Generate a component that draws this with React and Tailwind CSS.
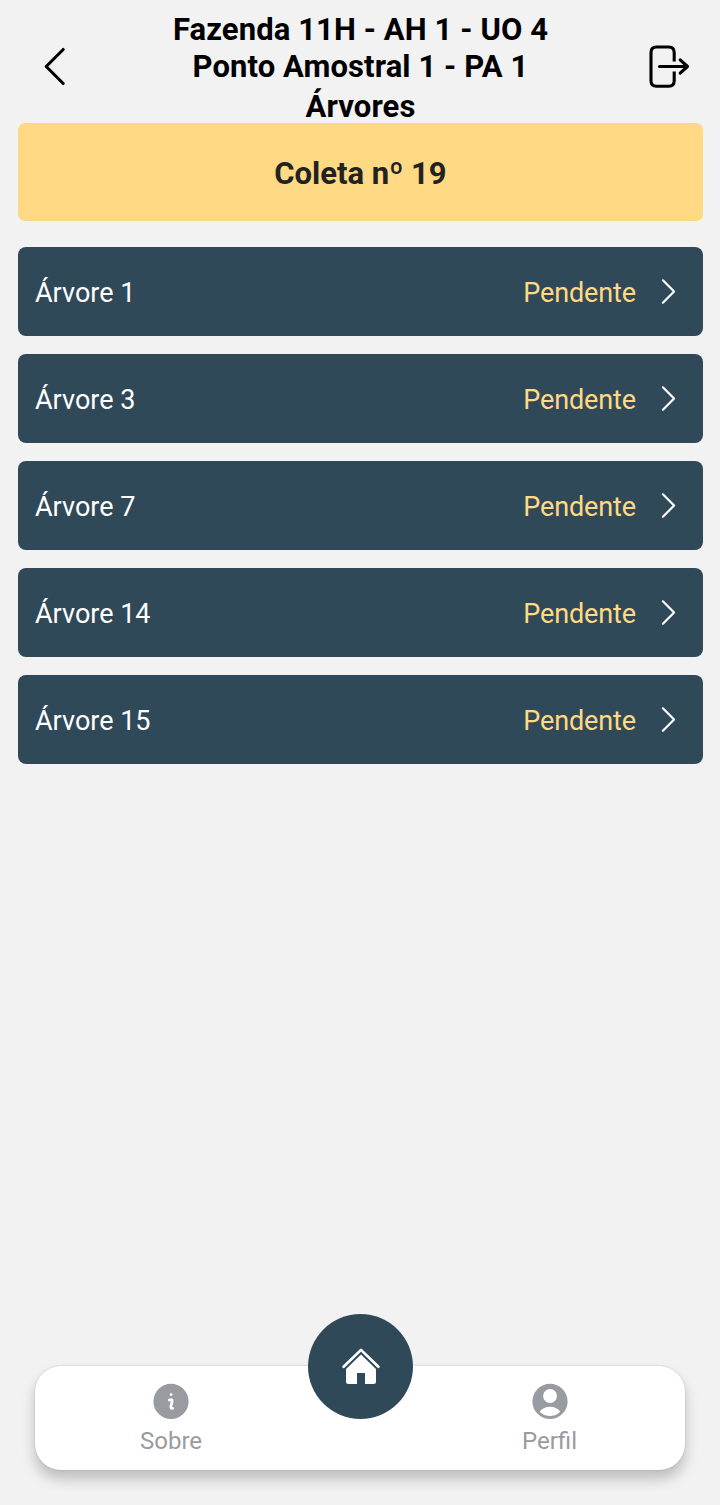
const trees = ['Árvore 1', 'Árvore 3', 'Árvore 7', 'Árvore 14', 'Árvore 15'];

function BackIcon() {
  return (
    <svg className="h-10 w-6" viewBox="0 0 24 40" fill="none" stroke="currentColor" strokeWidth="3.1" strokeLinecap="round" strokeLinejoin="round">
      <path d="M20.2 3.500 3.200 20.500 20.200 37.500" />
    </svg>
  );
}

function ExitIcon() {
  return (
    <svg className="h-11 w-11" viewBox="0 0 44 44" fill="none" stroke="currentColor" strokeWidth="3.1" strokeLinecap="butt" strokeLinejoin="round">
      <path d="M28.200 16.500V7.500Q28.200 2 22.700 2H10.500Q5 2 5 7.500V35.700Q5 41.200 10.500 41.200H22.700Q28.200 41.200 28.200 35.700V26.500" />
      <path d="M13.500 21.500H41.500M34.200 14.800 41.500 21.500 34.200 28.200" strokeLinecap="round" />
    </svg>
  );
}

function ChevronIcon() {
  return (
    <svg className="mb-px h-7 w-5" viewBox="0 0 20 28" fill="none" stroke="white" strokeWidth="2.200" strokeLinecap="round" strokeLinejoin="round">
      <path d="M4.900 3.300 16.100 14.500 4.900 25.700" />
    </svg>
  );
}

function HomeIcon() {
  return (
    <svg className="mb-[2px] h-10 w-10" viewBox="0 0 40 40" fill="white">
      <path d="M2.600 20.700 20 3.900 37.400 20.700" fill="none" stroke="white" strokeWidth="2.700" strokeLinecap="round" strokeLinejoin="round" />
      <path d="M20 8.500 35 23V35.500Q35 38 32.500 38H24V27H16V38H7.500Q5 38 5 35.500V23Z" />
    </svg>
  );
}

function InfoIcon() {
  return (
    <svg className="h-9 w-9" viewBox="0 0 36 36">
      <circle cx="18" cy="18.400" r="17.600" fill="#989ba0" />
      <circle cx="18.100" cy="11.600" r="1.400" fill="white" />
      <path d="M16.200 17.100Q19.500 15.800 19.200 18L17.900 23.200Q17.500 26 19.700 25.300" fill="none" stroke="white" strokeWidth="2.700" strokeLinecap="round" />
    </svg>
  );
}

function ProfileIcon() {
  return (
    <svg className="h-9 w-9" viewBox="0 0 36 36">
      <circle cx="18" cy="18.400" r="17.600" fill="#989ba0" />
      <circle cx="18" cy="13" r="6.900" fill="white" />
      <path d="M7.700 28.700C12.500 22.200 23.500 22.200 28.300 28.700C22.800 34.400 13.200 34.400 7.700 28.700Z" fill="white" />
    </svg>
  );
}

export default function App() {
  return (
    <div className="flex h-[1505px] w-[720px] flex-col bg-[#f2f2f2] font-['Roboto',sans-serif]">
      <header className="flex h-[123px] shrink-0 items-start justify-between pr-[30px] pl-[43px]">
        <button className="mt-[46px] w-[32px]"><BackIcon /></button>
        <h1 className="pt-[11px] text-center text-[31px] leading-[37px] font-bold tracking-[0.1px] text-black">
          <span className="block">Fazenda 11H - AH 1 - UO 4</span>
          <span className="block">Ponto Amostral 1 - PA 1</span>
          <span className="block pt-[3px]">Árvores</span>
        </h1>
        <button className="mt-[45px]"><ExitIcon /></button>
      </header>

      <main className="flex flex-1 flex-col pr-[17px] pl-[18px]">
        <div className="flex h-[98px] items-center justify-center rounded-[7px] bg-[#ffd983] pt-[5px] text-[31px] font-bold text-[#222]">
          Coleta nº 19
        </div>
        <ul className="mt-[26px] flex flex-col gap-[18px]">
          {trees.map((name) => (
            <li key={name} className="flex h-[89px] items-center rounded-lg bg-[#304958] pr-[25px] pl-[17px] text-[27px]">
              <span className="flex-1 pt-[3px] text-white">{name}</span>
              <span className="mr-[22px] pt-[3px] tracking-[-0.12px] text-[#ffd983]">Pendente</span>
              <ChevronIcon />
            </li>
          ))}
        </ul>
      </main>

      <nav className="relative mx-[35px] mb-[35px] flex h-[104px] shrink-0 justify-between rounded-[26px] bg-white pr-[65px] pl-[66px] text-[24px] text-[#989ba0] shadow-[0_9px_14px_rgba(0,0,0,0.22),0_0_2px_rgba(0,0,0,0.18)]">
        <a className="flex w-[140px] flex-col items-center pt-[17px]">
          <InfoIcon />
          <span className="mt-[6px] leading-[32px]">Sobre</span>
        </a>
        <a className="flex w-[140px] flex-col items-center pt-[17px]">
          <ProfileIcon />
          <span className="mt-[6px] pr-px leading-[32px]">Perfil</span>
        </a>
        <button className="absolute -top-[52px] left-[273px] flex h-[105px] w-[105px] items-center justify-center rounded-full bg-[#304958]">
          <HomeIcon />
        </button>
      </nav>
    </div>
  );
}
